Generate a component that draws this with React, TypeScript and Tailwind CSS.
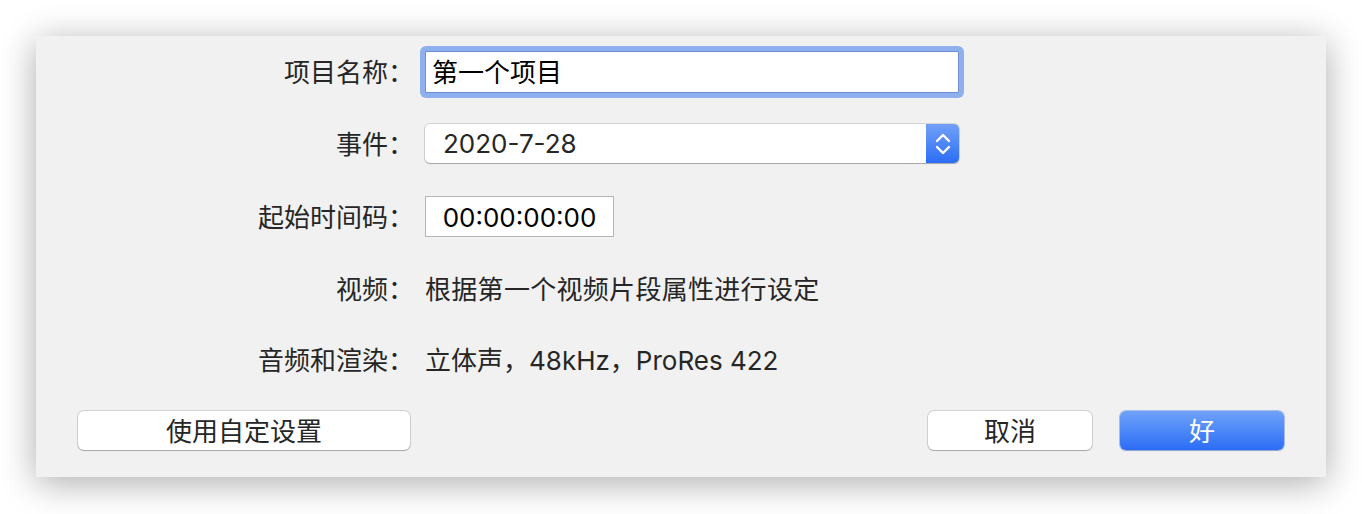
import React from "react";

const font = {
  fontFamily: 'Inter, "Noto Sans CJK SC", sans-serif',
};

function Label({ children }: { children: React.ReactNode }) {
  return (
    <div className="text-right text-[26px] leading-none text-[#262626] whitespace-nowrap pt-[2px]">
      {children}
    </div>
  );
}

function Row({ h, label, children }: { h: string; label: string; children: React.ReactNode }) {
  return (
    <div className={`grid grid-cols-[378px_1fr] gap-x-[11px] items-center ${h}`}>
      <Label>{label}</Label>
      <div className="flex items-center">{children}</div>
    </div>
  );
}

export default function App() {
  return (
    <div className="w-full h-[514px] bg-white pt-[36px] px-[36px]" style={font}>
      <div className="h-[441px] bg-[#f1f1f1] shadow-[0_6px_34px_rgba(0,0,0,0.33)] flex flex-col">
        <Row h="h-[72px]" label="项目名称：">
          <div className="w-[534px] h-[42px] bg-white border border-[#6e8fd6] rounded-[2px] shadow-[0_0_0_5px_#8fb0ee] flex items-center pl-[6px] pt-[2px] text-[26px] leading-none text-black">
            第一个项目
          </div>
        </Row>
        <Row h="h-[71px]" label="事件：">
          <div className="w-[534px] h-[39px] bg-white rounded-[5px] shadow-[0_0_0_1px_rgba(0,0,0,0.12),0_1px_1px_rgba(0,0,0,0.22)] flex items-stretch overflow-hidden">
            <div className="flex-1 flex items-center pl-[18px] pt-[1px] text-[26px] leading-none text-[#262626]">
              2020-7-28
            </div>
            <div className="w-[33px] bg-gradient-to-b from-[#72a0f7] to-[#2a6cf6] flex items-center justify-center">
              <svg width="18" height="30" viewBox="0 0 18 30" fill="none">
                <path d="M3 12 L9 6 L15 12" stroke="white" strokeWidth="2.4" strokeLinecap="round" strokeLinejoin="round" />
                <path d="M3 18 L9 24 L15 18" stroke="white" strokeWidth="2.4" strokeLinecap="round" strokeLinejoin="round" />
              </svg>
            </div>
          </div>
        </Row>
        <Row h="h-[75px]" label="起始时间码：">
          <div className="w-[189px] h-[41px] bg-white border border-[#b5b5b5] flex items-center justify-center pt-[2px] text-[26px] leading-none text-black">
            00:00:00:00
          </div>
        </Row>
        <Row h="h-[70px]" label="视频：">
          <div className="text-[26px] leading-none text-[#262626] whitespace-nowrap tracking-[0.3px] pt-[2px]">
            根据第一个视频片段属性进行设定
          </div>
        </Row>
        <Row h="h-[72px]" label="音频和渲染：">
          <div className="text-[26px] leading-none text-[#262626] whitespace-nowrap pt-[2px]">
            立体声，48kHz，ProRes 422
          </div>
        </Row>
        <div className="mt-[15px] flex items-center px-[42px]">
          <button className="w-[332px] h-[39px] bg-white rounded-[6px] shadow-[0_0_0_1px_rgba(0,0,0,0.13),0_1px_1px_rgba(0,0,0,0.2)] text-[26px] leading-none text-[#262626] flex items-center justify-center pt-[2px]">
            使用自定设置
          </button>
          <div className="flex-1" />
          <button className="w-[164px] h-[39px] bg-white rounded-[6px] shadow-[0_0_0_1px_rgba(0,0,0,0.13),0_1px_1px_rgba(0,0,0,0.2)] text-[26px] leading-none text-[#262626] flex items-center justify-center pt-[2px]">
            取消
          </button>
          <button className="ml-[28px] w-[164px] h-[39px] rounded-[6px] bg-gradient-to-b from-[#6fa2f8] to-[#2b6cf6] shadow-[0_0_0_1px_rgba(40,90,220,0.35),0_1px_1px_rgba(0,0,0,0.15)] text-[26px] leading-none text-white flex items-center justify-center pt-[2px]">
            好
          </button>
        </div>
      </div>
    </div>
  );
}
